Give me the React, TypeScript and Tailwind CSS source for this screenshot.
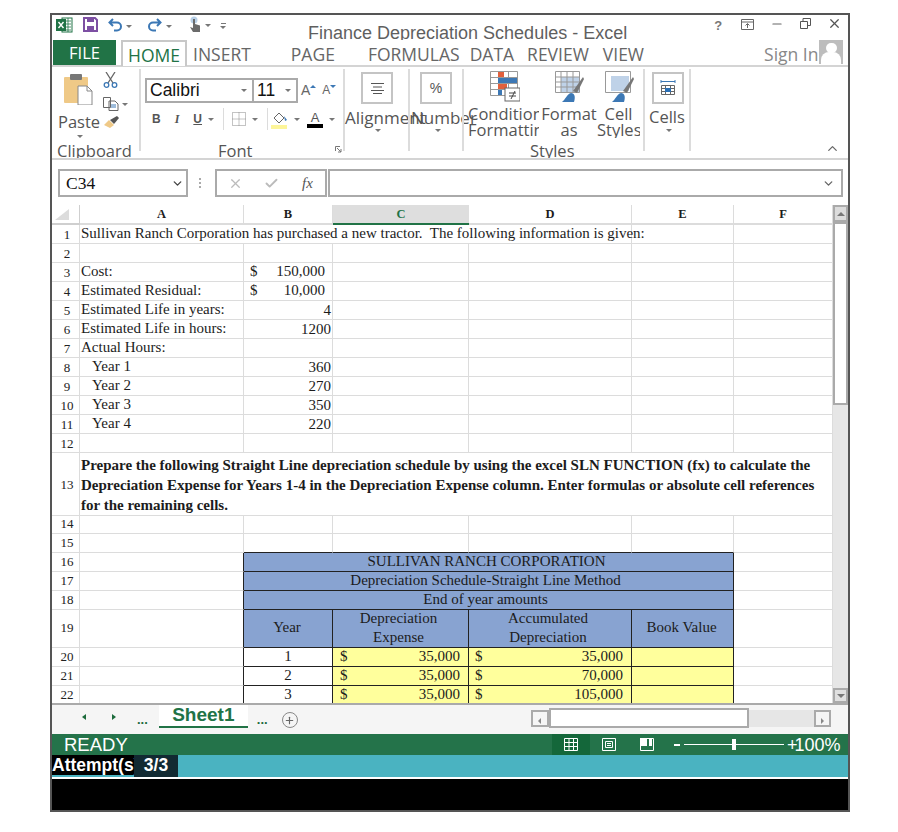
import React from "react";
import { ChevronDown, ChevronUp, Check, X, Minus, Plus } from "lucide-react";

const cols = "grid grid-cols-[28px_164px_89px_136px_163px_102px_99px]";
const line = "border-r border-b border-[#dcdcdc]";
const dark = "border-r border-b border-[#222]";
const leftEdge = "border-r border-b border-r-[#222] border-b-[#dcdcdc]";
const topEdge = "border-r border-b border-r-[#dcdcdc] border-b-[#222]";

function Caret({ className = "" }: { className?: string }) {
  return <span className={`inline-block h-0 w-0 border-x-[3px] border-t-[3px] border-x-transparent border-t-[#777] ${className}`} />;
}

function RowNum({ n }: { n: number }) {
  return (
    <div className={`${line} flex items-center justify-center pl-[3px] text-[13px] leading-none text-[#222] ${n > 13 ? "pb-[2px]" : ""}`}>
      {n}
    </div>
  );
}

function Row({ n, a, b, indent }: { n: number; a?: string; b?: React.ReactNode; indent?: boolean }) {
  return (
    <div className={`${cols} h-[19px]`}>
      <RowNum n={n} />
      <div className={`${line} ${indent ? "pl-[12px]" : "pl-[1px]"} leading-[17px]`}>{a}</div>
      <div className={`${line} pr-[1px] text-right leading-[18px]`}>{b}</div>
      <div className={line} />
      <div className={line} />
      <div className={line} />
      <div className={line} />
    </div>
  );
}

function Money({ v }: { v: string }) {
  return (
    <div className="flex justify-between pr-[6px] pl-[6px] leading-[17px]">
      <span>$</span>
      <span>{v}</span>
    </div>
  );
}

function ScheduleTitle({ n, text, pad }: { n: number; text: string; pad: string }) {
  return (
    <div className={`${cols} h-[19px]`}>
      <RowNum n={n} />
      <div className={leftEdge} />
      <div className={`${dark} ${pad} col-span-4 bg-[#88a3d1] text-center leading-[17px] text-[#1a1a1a]`}>{text}</div>
      <div className={line} />
    </div>
  );
}

function DataRow({ n, year, exp, acc }: { n: number; year: string; exp: string; acc: string }) {
  return (
    <div className={`${cols} h-[19px]`}>
      <RowNum n={n} />
      <div className={leftEdge} />
      <div className={`${dark} bg-white text-center leading-[16px]`}>{year}</div>
      <div className={`${dark} bg-[#ffff9c] pr-[8px] pl-[7px] leading-[16px]`}>
        <div className="flex justify-between">
          <span>$</span>
          <span>{exp}</span>
        </div>
      </div>
      <div className={`${dark} bg-[#ffff9c] pr-[8px] pl-[6px] leading-[16px]`}>
        <div className="flex justify-between">
          <span>$</span>
          <span>{acc}</span>
        </div>
      </div>
      <div className={`${dark} bg-[#ffff9c]`} />
      <div className={line} />
    </div>
  );
}

function Sheet() {
  return (
    <div className="h-[498px] w-[781px] overflow-hidden font-['Liberation_Serif',serif] text-[15px] text-[#1c1c1c]">
      <div className={`${cols} h-[20px] text-[12.5px] font-bold`}>
        <div className="flex items-end border-r border-b-2 border-[#cfcfcf] p-[2px]">
          <svg width="16" height="13" viewBox="0 0 16 13">
            <path d="M1 12 L15 12 L15 1 Z" fill="#dcdcdc" />
          </svg>
        </div>
        <div className="border-r border-b-2 border-[#dcdcdc] text-center leading-[18px]">A</div>
        <div className="border-r border-b-2 border-[#dcdcdc] text-center leading-[18px]">B</div>
        <div className="border-b-2 border-[#217346] bg-[#dedede] text-center leading-[18px] text-[#217346]">C</div>
        <div className="border-r border-b-2 border-[#dcdcdc] text-center leading-[18px]">D</div>
        <div className="border-r border-b-2 border-[#dcdcdc] text-center leading-[18px]">E</div>
        <div className="border-r border-b-2 border-[#dcdcdc] text-center leading-[18px]">F</div>
      </div>

      <div className={`${cols} h-[19px]`}>
        <RowNum n={1} />
        <div className={`${line} col-span-4 pl-[1px] leading-[17px] whitespace-nowrap`}>
          Sullivan Ranch Corporation has purchased a new tractor.&nbsp; The following information is given:
        </div>
        <div className={line} />
        <div className={line} />
      </div>
      <Row n={2} />
      <Row n={3} a="Cost:" b={<Money v="150,000" />} />
      <Row n={4} a="Estimated Residual:" b={<Money v="10,000" />} />
      <Row n={5} a="Estimated Life in years:" b="4" />
      <Row n={6} a="Estimated Life in hours:" b="1200" />
      <Row n={7} a="Actual Hours:" />
      <Row n={8} a="Year 1" b="360" indent />
      <Row n={9} a="Year 2" b="270" indent />
      <Row n={10} a="Year 3" b="350" indent />
      <Row n={11} a="Year 4" b="220" indent />
      <Row n={12} />

      <div className={`${cols} h-[62px]`}>
        <RowNum n={13} />
        <div className={`${line} col-span-6 pt-[2px] pr-[12px] pl-[1px] leading-[20px] font-bold`}>
          Prepare the following Straight Line depreciation schedule by using the excel SLN FUNCTION (fx) to calculate the Depreciation Expense for Years 1-4 in the Depreciation Expense column. Enter formulas or absolute cell references for the remaining cells.
        </div>
      </div>

      <Row n={14} />
      <div className={`${cols} h-[19px]`}>
        <RowNum n={15} />
        <div className={line} />
        <div className={topEdge} />
        <div className={topEdge} />
        <div className={topEdge} />
        <div className={topEdge} />
        <div className={line} />
      </div>
      <ScheduleTitle n={16} text="SULLIVAN RANCH CORPORATION" pad="pr-[4px]" />
      <ScheduleTitle n={17} text="Depreciation Schedule-Straight Line Method" pad="pr-[6px]" />
      <ScheduleTitle n={18} text="End of year amounts" pad="pr-[6px]" />

      <div className={`${cols} h-[38px]`}>
        <RowNum n={19} />
        <div className={leftEdge} />
        <div className={`${dark} flex items-center justify-center bg-[#88a3d1] pr-[2px] pb-[3px]`}>Year</div>
        <div className={`${dark} bg-[#88a3d1] pr-[4px] text-center leading-[18.5px]`}>
          <div className="-mt-px">
            Depreciation
            <br />
            Expense
          </div>
        </div>
        <div className={`${dark} bg-[#88a3d1] pr-[4px] text-center leading-[18.5px]`}>
          <div className="-mt-px">
            Accumulated
            <br />
            Depreciation
          </div>
        </div>
        <div className={`${dark} flex items-center justify-center bg-[#88a3d1] pr-[2px] pb-[3px]`}>Book Value</div>
        <div className={line} />
      </div>
      <DataRow n={20} year="1" exp="35,000" acc="35,000" />
      <DataRow n={21} year="2" exp="35,000" acc="70,000" />
      <DataRow n={22} year="3" exp="35,000" acc="105,000" />
    </div>
  );
}

function TitleBar() {
  return (
    <div className="flex h-[25px] items-start overflow-hidden bg-white">
      <svg className="mt-[2px] ml-[4px]" width="17" height="16" viewBox="0 0 17 16">
        <rect x="6" y="1" width="10" height="14" fill="#fff" stroke="#217346" />
        <path d="M9 4h6M9 7h6M9 10h6M9 13h6M12 1v14" stroke="#217346" strokeWidth="0.8" />
        <rect x="0" y="2" width="10" height="12" fill="#217346" />
        <path d="M2.5 5l5 6M7.5 5l-5 6" stroke="#fff" strokeWidth="1.4" />
      </svg>
      <svg className="mt-[2px] ml-[10px]" width="15" height="15" viewBox="0 0 15 15">
        <path d="M1 1h11l2 2v11H1z" fill="#fff" stroke="#7d4fa3" strokeWidth="2" />
        <rect x="4" y="1" width="7" height="4" fill="#7d4fa3" />
        <rect x="4" y="9" width="7" height="5" fill="#7d4fa3" />
      </svg>
      <svg className="mt-[3px] ml-[10px]" width="15" height="14" viewBox="0 0 15 14">
        <path d="M5 1L1.5 4.5 5 8M2 4.5h7a4 4 0 0 1 0 8H6" fill="none" stroke="#3c78b5" strokeWidth="2" />
      </svg>
      <Caret className="mt-[10px] ml-[3px]" />
      <svg className="mt-[3px] ml-[15px]" width="15" height="14" viewBox="0 0 15 14">
        <path d="M10 1l3.500 3.500L10 8M13 4.500H6a4 4 0 0 0 0 8h3" fill="none" stroke="#3c78b5" strokeWidth="2" />
      </svg>
      <Caret className="mt-[10px] ml-[4px]" />
      <svg className="mt-[1px] ml-[16px]" width="14" height="17" viewBox="0 0 14 17">
        <circle cx="6" cy="4" r="3.500" fill="#b7cfe6" />
        <path d="M5 3h2v5l5 1.500V16H5L2 11l3 1z" fill="#6b6b6b" />
      </svg>
      <Caret className="mt-[9px] ml-[3px]" />
      <div className="mt-[8px] ml-[9px] flex flex-col items-center gap-[2px]">
        <span className="h-px w-[5px] bg-[#777]" />
        <Caret />
      </div>
      <div className="mt-[8px] ml-[82px] font-['Liberation_Sans',sans-serif] text-[18px] leading-[20px] whitespace-nowrap text-[#5f5f5f]">
        Finance Depreciation Schedules - Excel
      </div>
      <div className="mt-[3px] ml-[87px] font-['Liberation_Sans',sans-serif] text-[13px] leading-[15px] font-bold text-[#777]">?</div>
      <svg className="mt-[4px] ml-[19px]" width="13" height="11" viewBox="0 0 13 11">
        <path d="M.5.500h12v10H.5zM.5 3h12M6.500 9V5M4.500 6.500l2-2 2 2" fill="none" stroke="#666" />
      </svg>
      <Minus className="mt-[2px] ml-[16px]" size={14} color="#666" />
      <svg className="mt-[3px] ml-[16px]" width="11" height="11" viewBox="0 0 11 11">
        <path d="M.5 3.500h7v7h-7zM3 3.500V.5h7.500v7H7.500" fill="none" stroke="#555" />
      </svg>
      <X className="mt-[1px] ml-[16px]" size={15} color="#555" strokeWidth={2} />
    </div>
  );
}

function TabRow() {
  const tab = "font-['Open_Sans',sans-serif] text-[17.5px] leading-[29px] text-[#666] whitespace-nowrap";
  return (
    <div className="flex h-[25px] items-start bg-white">
      <div className="ml-px h-[25px] w-[63px] bg-[#217346] text-center font-['Open_Sans',sans-serif] text-[16.5px] leading-[25px] text-white">FILE</div>
      <div className="ml-[5px] h-[26px] w-[66px] border-x-2 border-t-2 border-[#c8c8c8] bg-white text-center font-['Open_Sans',sans-serif] text-[17.5px] leading-[26px] text-[#217346]">HOME</div>
      <div className={`${tab} ml-[6px]`}>INSERT</div>
      <div className={`${tab} ml-[40px]`}>PAGE</div>
      <div className={`${tab} ml-[33px]`}>FORMULAS</div>
      <div className={`${tab} ml-[10px]`}>DATA</div>
      <div className={`${tab} ml-[13px]`}>REVIEW</div>
      <div className={`${tab} ml-[14px]`}>VIEW</div>
      <div className={`${tab} ml-[120px] text-[#888]`}>Sign In</div>
      <div className="ml-[1px] flex h-[24px] w-[24px] flex-col items-center overflow-hidden bg-[#bdbdbd]">
        <span className="mt-[3px] h-[11px] w-[11px] rounded-full bg-white" />
        <span className="mt-[-1px] h-[14px] w-[20px] rounded-t-[8px] bg-white" />
      </div>
    </div>
  );
}

function BoxIcon({ children, className = "" }: { children: React.ReactNode; className?: string }) {
  return <div className={`flex h-[32px] w-[32px] shrink-0 items-center justify-center border-2 border-[#c4c4c4] ${className}`}>{children}</div>;
}

function Ribbon() {
  const label = "shrink-0 font-['Open_Sans',sans-serif] text-[16.5px] leading-[20px] text-[#555] whitespace-nowrap";
  const sep = "w-[2px] self-stretch mb-[7px] mt-[2px] bg-[#dcdcdc]";
  const small = "font-['Open_Sans',sans-serif] text-[16.5px] leading-[16px] text-[#555]";
  return (
    <div className="flex h-[91px] overflow-hidden bg-white">
      {/* clipboard */}
      <div className="flex w-[87px] flex-col">
        <div className="flex h-[45px] shrink-0">
          <svg className="mt-[7px] ml-[12px]" width="29" height="31" viewBox="0 0 29 31">
            <rect x="0" y="3" width="24" height="26" rx="1" fill="#efc987" />
            <rect x="6" y="0" width="12" height="6" rx="1" fill="#777" />
            <path d="M14 12h9l5 5v14H14z" fill="#fff" stroke="#888" />
            <path d="M23 12v5h5" fill="none" stroke="#888" />
          </svg>
          <div className="mt-[5px] ml-[10px] flex flex-col gap-[9px]">
            <svg width="15" height="16" viewBox="0 0 15 16">
              <path d="M3 0l7 11M12 0L5 11" stroke="#666" strokeWidth="1.300" fill="none" />
              <circle cx="3.500" cy="13" r="2.300" fill="none" stroke="#3c78b5" strokeWidth="1.300" />
              <circle cx="11.500" cy="13" r="2.300" fill="none" stroke="#3c78b5" strokeWidth="1.300" />
            </svg>
            <div className="flex items-center gap-[3px]">
              <svg width="16" height="14" viewBox="0 0 16 14">
                <path d="M.5.500h7v10h-7zM6 4h6l3 3v6.500H6z" fill="#fff" stroke="#666" />
                <path d="M8 8h5M8 10h5" stroke="#3c78b5" />
              </svg>
              <Caret />
            </div>
          </div>
        </div>
        <div className={`${label} flex items-center pl-[6px]`}>
          Paste
          <svg className="ml-[3px]" width="17" height="14" viewBox="0 0 17 14">
            <path d="M1 10l5-5 5 5-4 3z" fill="#efc987" />
            <path d="M7 5l7-4 2 2-5 6z" fill="#555" />
          </svg>
        </div>
        <div className="flex h-[9px] shrink-0 items-center pl-[25px]"><Caret /></div>
        <div className={`${label} pl-[5px]`}>Clipboard</div>
      </div>
      <div className={sep} />

      {/* font */}
      <div className="relative flex w-[202px] flex-col">
        <div className="mt-[10px] ml-[4px] flex h-[26px] shrink-0 items-center">
          <div className="flex h-[25px] w-[109px] items-center justify-between border-2 border-[#aaa] pr-[5px] pl-[3px] font-['Liberation_Sans',sans-serif] text-[17.5px] text-[#111]">
            Calibri
            <Caret />
          </div>
          <div className="flex h-[25px] w-[44px] items-center justify-between border-y-2 border-r-2 border-[#aaa] pr-[5px] pl-[3px] font-['Liberation_Sans',sans-serif] text-[17.5px] text-[#111]">
            11
            <Caret />
          </div>
          <span className="ml-[3px] font-['Liberation_Sans',sans-serif] text-[14px] text-[#666]">A</span>
          <span className="mb-[8px] h-0 w-0 border-x-[3px] border-b-[3px] border-x-transparent border-b-[#3c78b5]" />
          <span className="ml-[6px] font-['Liberation_Sans',sans-serif] text-[12px] text-[#666]">A</span>
          <span className="mb-[8px] h-0 w-0 border-x-[3px] border-t-[3px] border-x-transparent border-t-[#3c78b5]" />
        </div>
        <div className="mt-[5px] flex h-[22px] shrink-0 items-center font-['Liberation_Sans',sans-serif] text-[12px] text-[#555]">
          <span className="ml-[11px] font-bold">B</span>
          <span className="ml-[14px] font-['Liberation_Serif',serif] font-bold italic">I</span>
          <span className="ml-[14px] font-bold underline">U</span>
          <Caret className="ml-[6px]" />
          <span className="ml-[9px] h-[22px] w-px bg-[#dcdcdc]" />
          <svg className="ml-[8px]" width="14" height="14" viewBox="0 0 14 14">
            <path d="M.5.500h13v13H.5zM7 .5v13M.5 7h13" fill="none" stroke="#888" strokeDasharray="1 1" />
          </svg>
          <Caret className="ml-[6px]" />
          <span className="ml-[9px] h-[22px] w-px bg-[#dcdcdc]" />
          <svg className="ml-[3px]" width="17" height="19" viewBox="0 0 17 19">
            <path d="M3 8l5-5 5 5-5 5z" fill="#fff" stroke="#666" />
            <path d="M13 6l3 4-2 1z" fill="#3c78b5" />
            <rect x="0" y="15" width="16" height="4" fill="#fdf59a" />
          </svg>
          <Caret className="ml-[6px]" />
          <div className="ml-[7px] flex w-[16px] flex-col items-center">
            <span className="font-['Liberation_Sans',sans-serif] text-[13px] leading-[13px] text-[#555]">A</span>
            <span className="h-[4px] w-[16px] bg-black" />
          </div>
          <Caret className="ml-[6px]" />
        </div>
        <div className={`${label} mt-[11px] pl-[77px]`}>Font</div>
        <svg className="absolute right-[1px] bottom-[5px]" width="7" height="7" viewBox="0 0 7 7">
          <path d="M.5 5V.5H5M2 2l4 4M6 3v3H3" fill="none" stroke="#777" />
        </svg>
      </div>
      <div className={sep} />

      {/* alignment */}
      <div className="flex w-[63px] flex-col">
        <BoxIcon className="mt-[5px] ml-[16px]">
          <svg width="15" height="11" viewBox="0 0 15 11">
            <path d="M1 .5h13M3 4h9M1 7.500h13M3 10.500h9" stroke="#555" />
          </svg>
        </BoxIcon>
        <div className={`${label} mt-[4px] text-[17px]`}>Alignment</div>
        <div className="flex h-[4px] items-center pl-[30px]"><Caret /></div>
      </div>
      <div className={sep} />

      {/* number */}
      <div className="flex w-[52px] flex-col">
        <BoxIcon className="mt-[5px] ml-[10px]">
          <span className="font-['Liberation_Sans',sans-serif] text-[14px] text-[#555]">%</span>
        </BoxIcon>
        <div className={`${label} mt-[4px] pl-[1px] text-[17px]`}>Number</div>
        <div className="flex h-[4px] items-center pl-[25px]"><Caret /></div>
      </div>
      <div className={sep} />

      {/* styles */}
      <div className="flex w-[179px] flex-col">
        <div className="flex h-[37px] shrink-0 pt-[4px]">
          <svg className="ml-[26px]" width="30" height="31" viewBox="0 0 30 31">
            <path d="M.5.500h27v24H.5zM.5 6.500h27M.5 12.500h27M.5 18.500h27M9.500.5v24M18.500.5v24" fill="#fff" stroke="#999" />
            <rect x="8" y="1" width="6" height="5" fill="#e2603c" />
            <rect x="8" y="7" width="19" height="5" fill="#3c78b5" />
            <rect x="8" y="13" width="9" height="5" fill="#e2603c" />
            <rect x="8" y="19" width="4" height="5" fill="#3c78b5" />
            <rect x="15" y="17" width="15" height="13" fill="#fff" stroke="#666" />
            <path d="M19 22h7M19 25h7M25 20l-4 8" stroke="#444" />
          </svg>
          <svg className="ml-[35px]" width="30" height="31" viewBox="0 0 30 31">
            <path d="M.5.500h24v21H.5z" fill="#fff" stroke="#999" />
            <rect x="6" y="6" width="18" height="15" fill="#bfd2e8" />
            <path d="M.5 6h24M.5 11h24M.5 16h24M6 .5v21M12 .5v21M18 .5v21" stroke="#999" />
            <path d="M18 20l10-14 1 2-7 14z" fill="#777" />
            <path d="M7 31c3-2 5-8 9-9 3 0 5 3 3 9z" fill="#3c78b5" />
          </svg>
          <svg className="ml-[20px]" width="30" height="31" viewBox="0 0 30 31">
            <path d="M.5.500h25v21H.5z" fill="#fff" stroke="#999" />
            <rect x="6" y="5" width="18" height="15" fill="#bfd2e8" />
            <path d="M18 20l10-14 1 2-7 14z" fill="#777" />
            <path d="M7 31c3-2 5-8 9-9 3 0 5 3 3 9z" fill="#3c78b5" />
          </svg>
        </div>
        <div className="flex h-[34px] shrink-0 pt-[2px] text-center">
          <div className={`${small} ml-[4px] w-[71px] overflow-hidden whitespace-nowrap`}>Conditional<br />Formatting</div>
          <div className={`${small} ml-[2px] w-[56px] whitespace-nowrap`}>Format<br />as</div>
          <div className={`${small} w-[43px] overflow-hidden whitespace-nowrap`}>Cell<br />Styles</div>
        </div>
        <div className={`${label} mt-[3px] pl-[66px]`}>Styles</div>
      </div>
      <div className={sep} />

      {/* cells */}
      <div className="flex w-[44px] flex-col">
        <BoxIcon className="mt-[5px] ml-[7px]">
          <svg width="16" height="16" viewBox="0 0 16 16">
            <path d="M1 1.500h14M1 0v3M15 0v3" stroke="#3c78b5" />
            <path d="M1.500 5.500h13v9h-13zM1.500 8.500h13M1.500 11.500h13M5.500 5.500v9M10.500 5.500v9" fill="none" stroke="#666" />
            <rect x="5" y="8" width="6" height="4" fill="#2a6fb5" />
          </svg>
        </BoxIcon>
        <div className={`${label} mt-[3px] pl-[4px]`}>Cells</div>
        <div className="flex h-[6px] items-center pl-[21px]"><Caret /></div>
      </div>
      <div className={sep} />

      <div className="flex flex-1 items-end justify-end pr-[8px] pb-[2px]">
        <ChevronUp size={15} color="#666" />
      </div>
    </div>
  );
}

function FormulaBar() {
  return (
    <div className="flex h-[45px] items-start bg-white pt-[9px]">
      <div className="ml-[6px] flex h-[28px] w-[130px] items-center justify-between border-2 border-[#aaa] pr-[2px] pl-[6px] font-['Liberation_Serif',serif] text-[17.5px] text-[#111]">
        C34
        <ChevronDown size={13} color="#444" strokeWidth={2.5} />
      </div>
      <div className="ml-[11px] flex h-[28px] flex-col justify-center gap-[2px]">
        <span className="h-[2px] w-[2px] bg-[#aaa]" />
        <span className="h-[2px] w-[2px] bg-[#aaa]" />
        <span className="h-[2px] w-[2px] bg-[#aaa]" />
      </div>
      <div className="ml-[14px] flex h-[28px] w-[112px] items-center border-2 border-[#aaa] pl-[11px]">
        <X size={15} color="#bbb" />
        <Check className="ml-[21px]" size={15} color="#bbb" strokeWidth={3} />
        <span className="ml-[23px] font-['Liberation_Serif',serif] text-[15px] italic text-[#555]">fx</span>
      </div>
      <div className="ml-px flex h-[28px] w-[515px] items-center justify-end border-2 border-[#aaa] pr-[6px]">
        <ChevronDown size={13} color="#666" strokeWidth={2.5} />
      </div>
    </div>
  );
}

function VScroll() {
  return (
    <div className="flex h-[498px] w-[15px] flex-col bg-[#e6e6e6]">
      <div className="flex h-[17px] items-center justify-center border-2 border-[#aaa] bg-[#dcdcdc]">
        <span className="h-0 w-0 border-x-[4px] border-b-[4px] border-x-transparent border-b-[#777]" />
      </div>
      <div className="h-[183px] border-2 border-[#aaa] bg-white" />
      <div className="flex-1" />
      <div className="flex h-[15px] items-center justify-center border-2 border-[#aaa] bg-[#e0e0e0]">
        <span className="h-0 w-0 border-x-[4px] border-t-[4px] border-x-transparent border-t-[#777]" />
      </div>
    </div>
  );
}

function SheetTabs() {
  return (
    <div className="flex h-[31px] items-start border-t-2 border-[#aaa] bg-[#f5f5f5]">
      <span className="mt-[9px] ml-[30px] h-0 w-0 border-y-[3px] border-r-[4px] border-y-transparent border-r-[#1d6b3c]" />
      <span className="mt-[9px] ml-[26px] h-0 w-0 border-y-[3px] border-l-[4px] border-y-transparent border-l-[#1d6b3c]" />
      <span className="mt-[7px] ml-[21px] font-['Liberation_Sans',sans-serif] text-[13px] leading-[15px] font-bold text-[#1d6b3c]">...</span>
      <div className="ml-[11px] h-[23px] w-[89px] border-b-2 border-[#217346] bg-white text-center font-['Liberation_Sans',sans-serif] text-[19px] leading-[20px] font-bold text-[#217346]">Sheet1</div>
      <span className="mt-[7px] ml-[9px] font-['Liberation_Sans',sans-serif] text-[13px] leading-[15px] font-bold text-[#1d6b3c]">...</span>
      <span className="mt-[7px] ml-[14px] flex h-[16px] w-[16px] items-center justify-center rounded-full border border-[#888]">
        <Plus size={11} color="#666" strokeWidth={2.5} />
      </span>
      <div className="mt-[3px] ml-[233px] flex h-[20px] w-[300px] items-center">
        <div className="flex h-[17px] w-[18px] items-end justify-center border-2 border-[#aaa] pb-[1px]">
          <span className="h-0 w-0 border-y-[3px] border-r-[3px] border-y-transparent border-r-[#888]" />
        </div>
        <div className="h-[20px] w-[200px] border-2 border-[#aaa] bg-white" />
        <div className="h-[17px] flex-1 bg-[#e6e6e6]" />
        <div className="flex h-[17px] w-[17px] items-end justify-center border-2 border-[#aaa] pb-[1px]">
          <span className="h-0 w-0 border-y-[3px] border-l-[3px] border-y-transparent border-l-[#888]" />
        </div>
      </div>
    </div>
  );
}

function StatusBar() {
  return (
    <div className="flex h-[21px] items-center bg-[#24734a] font-['Liberation_Sans',sans-serif] text-white">
      <span className="ml-[12px] w-[488px] text-[18.5px] leading-[19px]">READY</span>
      <div className="flex h-[21px] w-[38px] items-center justify-center bg-[#14673a]">
        <svg width="14" height="13" viewBox="0 0 14 13">
          <path d="M.5.500h13v12H.5zM.5 4.500h13M.5 8.500h13M5 .5v12M9.500 .5v12" fill="none" stroke="#fff" />
        </svg>
      </div>
      <svg className="ml-[12px]" width="15" height="13" viewBox="0 0 15 13">
        <path d="M.5.500h13v12H.5z" fill="none" stroke="#fff" />
        <path d="M3.500 3.500h7v6h-7zM5 5.500h4M5 7.500h4" fill="none" stroke="#fff" />
      </svg>
      <svg className="ml-[23px]" width="14" height="13" viewBox="0 0 14 13">
        <path d="M.5.500h13v12H.5z" fill="none" stroke="#fff" />
        <rect x="0" y="0" width="7" height="8" fill="#fff" />
        <rect x="9" y="0" width="3" height="8" fill="#fff" />
      </svg>
      <span className="ml-[20px] h-[2px] w-[6px] bg-white" />
      <div className="relative ml-[4px] h-px w-[100px] bg-white">
        <span className="absolute top-[-5px] left-[48px] h-[11px] w-[4px] bg-white" />
      </div>
      <span className="ml-[3px] text-[18px] leading-[20px]">
        <span className="mr-[-3px]">+</span>100%
      </span>
    </div>
  );
}

export default function App() {
  return (
    <div className="h-[832px] w-[898px] bg-white pt-[13px] pl-[50px]">
      <div className="h-[799px] w-[800px] overflow-hidden border-2 border-[#555] bg-white">
        <TitleBar />
        <TabRow />
        <div className="h-[2px] bg-[#d4d4d4]" />
        <Ribbon />
        <div className="h-[2px] bg-[#d4d4d4]" />
        <FormulaBar />
        <div className="flex">
          <Sheet />
          <VScroll />
        </div>
        <SheetTabs />
        <StatusBar />
        <div className="flex h-[22px] items-start bg-[#4ab3c1] font-['Liberation_Sans',sans-serif] text-[17.5px] font-bold text-white">
          <div className="h-[20px] w-[82px] overflow-hidden bg-black leading-[20px] whitespace-nowrap">Attempt(s)</div>
          <div className="h-[22px] w-[44px] bg-[#122a32] text-center leading-[20px]">3/3</div>
        </div>
        <div className="h-[33px] border-t-2 border-white bg-black" />
      </div>
    </div>
  );
}
